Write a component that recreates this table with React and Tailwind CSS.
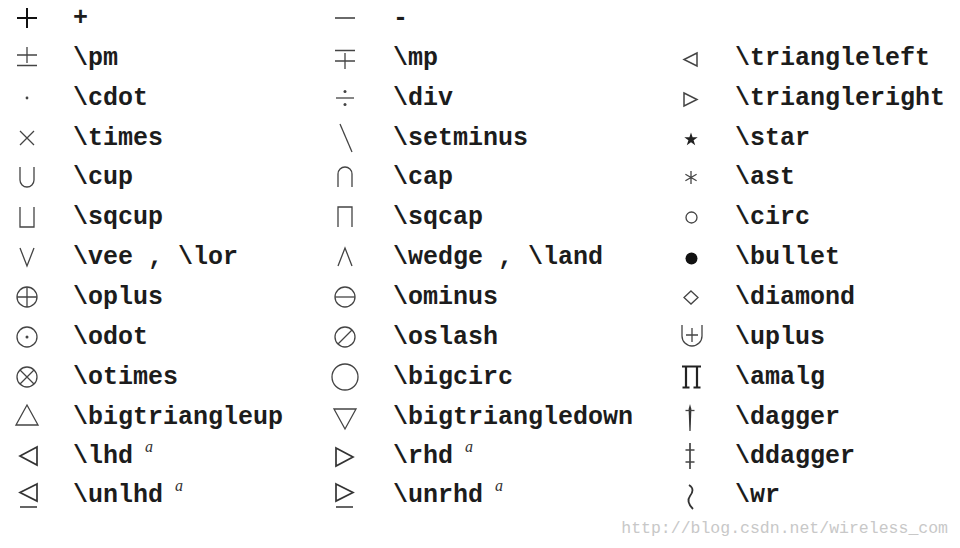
const ink = '#444';

function Glyph({ name }) {
  const s = { fill: 'none', stroke: ink, strokeWidth: 1.3, strokeLinejoin: 'miter' };
  let g = null;
  switch (name) {
    case 'plus':
      g = <path d="M13 20H33M23 10V30" fill="none" stroke="#111" strokeWidth="2" />;
      break;
    case 'minus':
      g = <path d="M13 20H33" {...s} strokeWidth="1.6" />;
      break;
    case 'pm':
      g = <path d="M13 17H33M23 9V25M13 27.5H33" {...s} />;
      break;
    case 'mp':
      g = <path d="M13 12.5H33M13 23H33M23 15V31" {...s} />;
      break;
    case 'cdot':
      g = <circle cx="23" cy="20" r="1.4" fill={ink} />;
      break;
    case 'div':
      g = (
        <g>
          <path d="M14 20H32" {...s} />
          <circle cx="23" cy="13.5" r="1.5" fill={ink} />
          <circle cx="23" cy="26.5" r="1.5" fill={ink} />
        </g>
      );
      break;
    case 'times':
      g = <path d="M16 13L30 27M30 13L16 27" {...s} />;
      break;
    case 'setminus':
      g = <path d="M18 6L30 34" {...s} />;
      break;
    case 'cup':
      g = <path d="M16 10V23a7 7 0 0 0 14 0V10" {...s} />;
      break;
    case 'cap':
      g = <path d="M16 30V17a7 7 0 0 1 14 0V30" {...s} />;
      break;
    case 'sqcup':
      g = <path d="M16 10V30H30V10" {...s} />;
      break;
    case 'sqcap':
      g = <path d="M16 30V10H30V30" {...s} />;
      break;
    case 'vee':
      g = <path d="M16 11L23 29L30 11" {...s} />;
      break;
    case 'wedge':
      g = <path d="M16 29L23 11L30 29" {...s} />;
      break;
    case 'oplus':
      g = <g {...s}><circle cx="23" cy="20" r="10" /><path d="M13 20H33M23 10V30" /></g>;
      break;
    case 'ominus':
      g = <g {...s}><circle cx="23" cy="20" r="10" /><path d="M13 20H33" /></g>;
      break;
    case 'oslash':
      g = <g {...s}><circle cx="23" cy="20" r="10" /><path d="M16 27L30 13" /></g>;
      break;
    case 'odot':
      g = (
        <g>
          <circle cx="23" cy="20" r="10" {...s} />
          <circle cx="23" cy="20" r="1.5" fill={ink} />
        </g>
      );
      break;
    case 'otimes':
      g = <g {...s}><circle cx="23" cy="20" r="10" /><path d="M16 13L30 27M30 13L16 27" /></g>;
      break;
    case 'bigcirc':
      g = <circle cx="23" cy="20" r="13" {...s} />;
      break;
    case 'bigtriangleup':
      g = <path d="M12 28L23 8L34 28Z" {...s} />;
      break;
    case 'bigtriangledown':
      g = <path d="M12 12H34L23 32Z" {...s} />;
      break;
    case 'lhd':
      g = <path d="M33 11L16 20L33 29Z" fill="none" stroke="#333" strokeWidth="1.7" />;
      break;
    case 'rhd':
      g = <path d="M14 12L31 21L14 30Z" fill="none" stroke="#333" strokeWidth="1.7" />;
      break;
    case 'unlhd':
      g = <path d="M33 9L16 17.5L33 26ZM16 32H33" fill="none" stroke="#333" strokeWidth="1.7" />;
      break;
    case 'unrhd':
      g = <path d="M14 9L31 17.5L14 26ZM14 32H31" fill="none" stroke="#333" strokeWidth="1.7" />;
      break;
    case 'triangleleft':
      g = <path d="M30 15L17 21.5L30 28Z" {...s} strokeWidth="1.5" />;
      break;
    case 'triangleright':
      g = <path d="M17 15L30 21.5L17 28Z" {...s} strokeWidth="1.5" />;
      break;
    case 'star':
      g = (
        <path
          d="M24 14.5L25.6 19.3L30.7 19.3L26.6 22.3L28.2 27.2L24 24.2L19.8 27.2L21.4 22.3L17.3 19.3L22.4 19.3Z"
          fill="#222"
        />
      );
      break;
    case 'ast':
      g = <path d="M24 14V27M18.4 17.2L29.6 23.8M29.6 17.2L18.4 23.8" {...s} />;
      break;
    case 'circ':
      g = <circle cx="24.5" cy="20.5" r="5.5" {...s} />;
      break;
    case 'bullet':
      g = <circle cx="24.5" cy="21.5" r="6" fill="#111" />;
      break;
    case 'diamond':
      g = <path d="M24 14L31 20.5L24 27L17 20.5Z" {...s} />;
      break;
    case 'uplus':
      g = <path d="M15 8V19a10 10 0 0 0 20 0V8M25 11V25M19 18H31" {...s} />;
      break;
    case 'amalg':
      g = (
        <path
          d="M15 9.5H34M19 9.5V30.5M15.5 30.5H22.5M30 9.5V30.5M26.5 30.5H33.5"
          fill="none"
          stroke="#222"
          strokeWidth="2.2"
        />
      );
      break;
    case 'dagger':
      g = (
        <g>
          <path d="M23 7L24.4 12L23.6 34H22.4L21.6 12Z" fill="#333" />
          <path d="M18.5 13.5H27.5" {...s} />
        </g>
      );
      break;
    case 'ddagger':
      g = (
        <g>
          <path d="M23 7V33" {...s} strokeWidth="1.7" />
          <path d="M18.5 14H27.5M18.5 26H27.5" {...s} strokeWidth="1.5" />
        </g>
      );
      break;
    case 'wr':
      g = <path d="M22 10C27 13 26 17 23 21C20 25 22 30 26 34" fill="none" stroke="#333" strokeWidth="1.8" />;
      break;
    default:
      g = null;
  }
  return (
    <svg width="46" height="40" viewBox="0 0 46 40" className="shrink-0 overflow-visible">
      {g}
    </svg>
  );
}

const rows = [
  [['plus', '+'], ['minus', '-'], null],
  [['pm', '\\pm'], ['mp', '\\mp'], ['triangleleft', '\\triangleleft']],
  [['cdot', '\\cdot'], ['div', '\\div'], ['triangleright', '\\triangleright']],
  [['times', '\\times'], ['setminus', '\\setminus'], ['star', '\\star']],
  [['cup', '\\cup'], ['cap', '\\cap'], ['ast', '\\ast']],
  [['sqcup', '\\sqcup'], ['sqcap', '\\sqcap'], ['circ', '\\circ']],
  [['vee', '\\vee , \\lor'], ['wedge', '\\wedge , \\land'], ['bullet', '\\bullet']],
  [['oplus', '\\oplus'], ['ominus', '\\ominus'], ['diamond', '\\diamond']],
  [['odot', '\\odot'], ['oslash', '\\oslash'], ['uplus', '\\uplus']],
  [['otimes', '\\otimes'], ['bigcirc', '\\bigcirc'], ['amalg', '\\amalg']],
  [['bigtriangleup', '\\bigtriangleup'], ['bigtriangledown', '\\bigtriangledown'], ['dagger', '\\dagger']],
  [['lhd', '\\lhd', true], ['rhd', '\\rhd', true], ['ddagger', '\\ddagger']],
  [['unlhd', '\\unlhd', true], ['unrhd', '\\unrhd', true], ['wr', '\\wr']],
];

const textGap = ['ml-[23px]', 'ml-[25px]', 'ml-[22px]'];

export default function App() {
  return (
    <div className="w-[960px] h-[548px] bg-white overflow-hidden">
      <div className="-mt-[2px] pl-[4px] grid grid-cols-[318px_345px_1fr] grid-rows-[40px_40px_40px_39px_40px_40px_40px_40px_40px_40px_40px_38px_39px]">
        {rows.map((row, r) =>
          row.map((cell, c) => (
            <div key={r + '-' + c} className="flex items-center">
              {cell && (
                <>
                  <Glyph name={cell[0]} />
                  <span
                    className={
                      textGap[c] +
                      " pt-[2px] whitespace-pre font-['Liberation_Mono',monospace] font-bold text-[25px] leading-[40px] text-[#1c1c1c]"
                    }
                  >
                    {cell[1]}
                    {cell[2] && (
                      <span className="relative -top-[11px] ml-[12px] leading-none font-['Liberation_Serif',serif] italic font-normal text-[16px] text-[#333]">
                        a
                      </span>
                    )}
                  </span>
                </>
              )}
            </div>
          ))
        )}
      </div>
      <div className="mt-[5px] flex justify-end pr-[12px]">
        <span className="font-['Liberation_Mono',monospace] text-[16.5px] leading-[20px] text-[#c8c8c8]">
          http://blog.csdn.net/wireless_com
        </span>
      </div>
    </div>
  );
}
